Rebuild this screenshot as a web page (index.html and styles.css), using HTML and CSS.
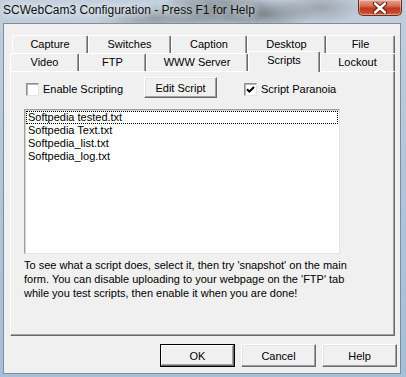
FILE: index.html
```html
<!DOCTYPE html>
<html lang="en">
<head>
  <meta charset="UTF-8">
  <title>SCWebCam3 Configuration</title>
  <link rel="stylesheet" href="styles.css">
</head>
<body>
  <div class="window">
    <div class="titlebar">
      <span class="title">SCWebCam3 Configuration - Press F1 for Help</span>
      <div class="close-btn">
        <svg width="16" height="12" viewBox="0 0 16 12">
          <path d="M3 1.5 L13 10.5 M13 1.5 L3 10.5" stroke="#5b1d12" stroke-width="4.4" stroke-linecap="round"/>
          <path d="M3 1.5 L13 10.5 M13 1.5 L3 10.5" stroke="#fff" stroke-width="2.4" stroke-linecap="round"/>
        </svg>
      </div>
    </div>

    <div class="client">
      <div class="tabs">
        <div class="tab-row back">
          <div class="tab t-capture">Capture</div>
          <div class="tab t-switches">Switches</div>
          <div class="tab t-caption">Caption</div>
          <div class="tab t-desktop">Desktop</div>
          <div class="tab t-file">File</div>
        </div>
        <div class="tab-row front">
          <div class="tab t-video">Video</div>
          <div class="tab t-ftp">FTP</div>
          <div class="tab t-www">WWW Server</div>
          <div class="tab t-scripts active">Scripts</div>
          <div class="tab t-lockout">Lockout</div>
        </div>

        <div class="panel">
          <div class="opts">
            <label class="check-group first">
              <span class="check"></span>
              <span>Enable Scripting</span>
            </label>
            <button class="btn edit-btn">Edit Script</button>
            <label class="check-group">
              <span class="check">
                <svg width="9" height="9" viewBox="0 0 9 9">
                  <polyline points="1,4.2 3.4,6.6 8,2" fill="none" stroke="#000" stroke-width="2"/>
                </svg>
              </span>
              <span>Script Paranoia</span>
            </label>
          </div>

          <div class="listbox">
            <div class="item focused">Softpedia tested.txt</div>
            <div class="item">Softpedia Text.txt</div>
            <div class="item">Softpedia_list.txt</div>
            <div class="item">Softpedia_log.txt</div>
          </div>

          <p class="hint">
            <span>To see what a script does, select it, then try 'snapshot' on the main</span>
            <span>form. You can disable uploading to your webpage on the 'FTP' tab</span>
            <span>while you test scripts, then enable it when you are done!</span>
          </p>
        </div>
      </div>

      <div class="actions">
        <button class="btn default">OK</button>
        <button class="btn">Cancel</button>
        <button class="btn">Help</button>
      </div>
    </div>
  </div>
</body>
</html>
```

FILE: styles.css
```css
body {
  margin: 0;
  font-family: "Liberation Sans", Arial, sans-serif;
  font-size: 11px;
  color: #000;
}

.window {
  width: 406px;
  height: 377px;
  overflow: hidden;
  background:
    radial-gradient(ellipse 60px 18px at 215px 10px, #6a7279 0%, rgba(106,114,121,0) 100%),
    radial-gradient(ellipse 50px 16px at 265px 14px, #838a91 0%, rgba(131,138,145,0) 100%),
    radial-gradient(ellipse 60px 14px at 155px 18px, #949ca4 0%, rgba(148,156,164,0) 100%),
    radial-gradient(ellipse 45px 16px at 320px 8px, #9da5ad 0%, rgba(157,165,173,0) 100%),
    linear-gradient(180deg, #c2cfdc 0%, #b4c6d9 40%, #a6bed7 100%);
}

.titlebar {
  height: 23px;
  display: flex;
  align-items: flex-start;
  padding: 0 4px 0 3px;
}
.title {
  font-size: 12px;
  line-height: 20px;
  color: #111;
  text-shadow: 0 0 6px #eef3f8, 0 0 10px #eef3f8;
}
.close-btn {
  margin-left: auto;
  width: 44px;
  height: 16px;
  box-sizing: border-box;
  border: 1px solid #6b2a1e;
  border-top: none;
  border-radius: 0 0 5px 5px;
  background: linear-gradient(180deg, #e7a28f 0%, #d56c52 40%, #c0391f 55%, #c9492c 85%, #d8734f 100%);
  box-shadow: inset 0 0 0 1px rgba(255,255,255,0.35);
  display: flex;
  align-items: center;
  justify-content: center;
}

.client {
  margin-left: 3px;
  width: 398px;
  height: 351px;
  box-sizing: border-box;
  border: 1px solid #7e8d9c;
  background: #f0f0f0;
}

.tabs {
  margin: 11px 0 0 6px;
  width: 385px;
}
.tab-row {
  display: flex;
  height: 18px;
}
.tab-row.back {
  padding-left: 2px;
}
.tab {
  height: 18px;
  box-sizing: border-box;
  line-height: 17px;
  text-align: center;
  background: #f0f0f0;
  border-top: 1px solid #fff;
  border-left: 1px solid #fff;
  border-right: 1px solid #696969;
  box-shadow: inset -1px 0 #a0a0a0;
  border-radius: 2px 2px 0 0;
}
.t-capture { width: 76px; }
.t-switches { width: 83px; }
.t-caption { width: 76px; }
.t-desktop { width: 79px; }
.t-file { width: 69px; }
.t-video { width: 69px; }
.t-ftp { width: 67px; }
.t-www { width: 102px; }
.t-scripts { width: 72px; }
.t-lockout { width: 75px; }

.tab.active {
  height: 21px;
  margin-top: -2px;
  line-height: 16px;
  position: relative;
  z-index: 2;
}

.panel {
  height: 265px;
  box-sizing: border-box;
  border-top: 1px solid #fff;
  border-left: 1px solid #fff;
  border-right: 1px solid #696969;
  border-bottom: 1px solid #696969;
  box-shadow: inset -1px -1px #a0a0a0;
  padding: 5px 0 0 13px;
}

.opts {
  display: flex;
  align-items: center;
  height: 21px;
  padding-left: 2px;
}
.check-group {
  display: flex;
  align-items: center;
  gap: 4px;
  margin-top: 3px;
}
.check-group.first {
  width: 118px;
}
.check-group:last-child {
  margin-left: 27px;
}
.check {
  width: 13px;
  height: 13px;
  box-sizing: border-box;
  background: #fff;
  border: 1px solid;
  border-color: #8f8f8f #e3e3e3 #e3e3e3 #8f8f8f;
  box-shadow: inset 1px 1px #b5b5b5;
  display: flex;
  align-items: center;
  justify-content: center;
}

.btn {
  font-family: inherit;
  font-size: 11px;
  color: #000;
  background: #f0f0f0;
  box-sizing: border-box;
  border: 1px solid;
  border-color: #fff #696969 #696969 #fff;
  box-shadow: inset -1px -1px #a0a0a0, inset 1px 1px #e3e3e3;
  padding: 0;
  border-radius: 0;
}
.edit-btn {
  width: 73px;
  height: 21px;
}

.listbox {
  margin-top: 11px;
  width: 316px;
  height: 145px;
  box-sizing: border-box;
  background: #fff;
  border: 1px solid;
  border-color: #a0a0a0 #e3e3e3 #e3e3e3 #a0a0a0;
  box-shadow: inset 1px 1px #d4d4d4;
  padding: 1px 1px 0 1px;
}
.item {
  height: 13px;
  line-height: 13px;
  padding-left: 2px;
  white-space: nowrap;
}
.item.focused {
  outline: 1px dotted #000;
  outline-offset: -1px;
}

.hint {
  margin: 4px 0 0 0;
  line-height: 14px;
}
.hint span {
  display: block;
  white-space: nowrap;
}

.actions {
  display: flex;
  justify-content: flex-end;
  gap: 6px;
  margin-top: 8px;
  padding-right: 3px;
}
.actions .btn {
  width: 75px;
  height: 23px;
}
.actions .btn.default {
  border-color: #000;
  box-shadow: inset -1px -1px #696969, inset 1px 1px #fff, inset -2px -2px #a0a0a0;
}
```
